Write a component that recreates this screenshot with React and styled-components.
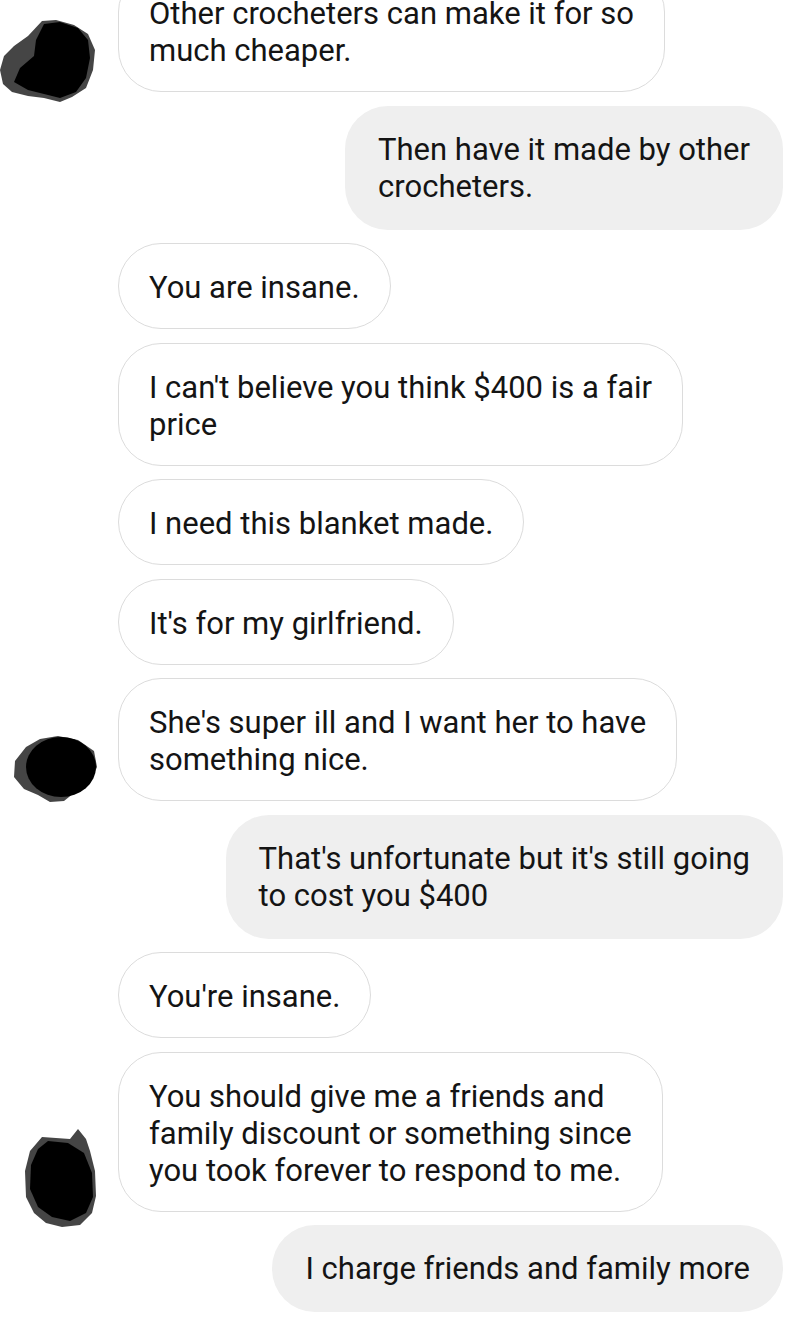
import styled, { createGlobalStyle } from "styled-components";

const GlobalStyle = createGlobalStyle`
  body {
    margin: 0;
    background: #ffffff;
    font-family: Roboto, "Noto Sans", Arial, sans-serif;
    color: #141414;
  }
`;

const Thread = styled.div`
  display: flex;
  flex-direction: column;
  gap: 13.5px;
  margin-top: -31px;
  padding-right: 17px;
  overflow: hidden;
`;

const Group = styled.div`
  display: flex;
  align-items: flex-end;
  justify-content: ${props => (props.$mine ? "flex-end" : "flex-start")};
`;

const AvatarSlot = styled.div`
  width: 118px;
  flex-shrink: 0;
  height: 0;
  position: relative;
`;

const Blob = styled.svg`
  position: absolute;
  left: 0;
  bottom: ${props => props.$drop || 0}px;
`;

const Stack = styled.div`
  display: flex;
  flex-direction: column;
  gap: 13.5px;
  align-items: ${props => (props.$mine ? "flex-end" : "flex-start")};
`;

const Bubble = styled.div`
  font-size: 31px;
  line-height: 37px;
  white-space: nowrap;
  border-radius: 43px;
  background: ${props => (props.$mine ? "#efefef" : "#ffffff")};
  border: ${props => (props.$mine ? "none" : "1px solid #dcdcdc")};
  padding: ${props => (props.$mine ? "25px 33px 25px 33px" : "25px 30px 22px")};
`;

function Avatar({ kind }) {
  if (kind === 1) {
    return (
      <Blob width="100" height="86" viewBox="0 21 100 86" $drop={-13}>
        <path
          fill="#454545"
          d="M42 23 L56 22 L74 27 L88 36 L95 52 L93 72 L86 90 L72 99 L60 104 L44 100 L28 98 L12 94 L3 86 L0 72 L4 58 L14 48 L28 38 Z"
        />
        <path
          fill="#000"
          d="M44 26 L60 24 L78 30 L88 42 L90 60 L86 80 L76 94 L60 100 L44 96 L28 92 L14 84 L20 70 L34 58 L36 42 Z"
        />
      </Blob>
    );
  }
  if (kind === 2) {
    return (
      <Blob width="100" height="70" viewBox="0 738 100 70" $drop={-4}>
        <path
          fill="#454545"
          d="M40 742 L58 739 L78 743 L94 754 L97 770 L90 786 L74 796 L64 804 L50 805 L38 798 L24 792 L14 780 L15 764 L26 750 Z"
        />
        <ellipse cx="61" cy="770" rx="35" ry="30" fill="#000" />
      </Blob>
    );
  }
  return (
    <Blob width="100" height="100" viewBox="0 1127 100 100" $drop={-16}>
      <path
        fill="#454545"
        d="M42 1136 L70 1138 L78 1128 L86 1138 L90 1150 L95 1170 L96 1195 L92 1212 L80 1224 L62 1226 L46 1222 L34 1212 L26 1196 L25 1170 L30 1150 Z"
      />
      <path
        fill="#000"
        d="M48 1140 L68 1142 L84 1152 L92 1172 L93 1196 L86 1212 L70 1220 L52 1216 L38 1206 L30 1188 L31 1164 L38 1148 Z"
      />
    </Blob>
  );
}

function Lines({ lines }) {
  return lines.map((line, i) => (
    <span key={i}>
      {i > 0 && <br />}
      {line}
    </span>
  ));
}

function TheirGroup({ avatar, messages }) {
  return (
    <Group>
      <AvatarSlot>
        <Avatar kind={avatar} />
      </AvatarSlot>
      <Stack>
        {messages.map((m, i) => (
          <Bubble key={i}>
            <Lines lines={m} />
          </Bubble>
        ))}
      </Stack>
    </Group>
  );
}

function MyGroup({ messages }) {
  return (
    <Group $mine>
      <Stack $mine>
        {messages.map((m, i) => (
          <Bubble key={i} $mine>
            <Lines lines={m} />
          </Bubble>
        ))}
      </Stack>
    </Group>
  );
}

export default function App() {
  return (
    <>
      <GlobalStyle />
      <Thread>
        <TheirGroup
          avatar={1}
          messages={[["Other crocheters can make it for so", "much cheaper."]]}
        />
        <MyGroup messages={[["Then have it made by other", "crocheters."]]} />
        <TheirGroup
          avatar={2}
          messages={[
            ["You are insane."],
            ["I can't believe you think $400 is a fair", "price"],
            ["I need this blanket made."],
            ["It's for my girlfriend."],
            ["She's super ill and I want her to have", "something nice."],
          ]}
        />
        <MyGroup
          messages={[["That's unfortunate but it's still going", "to cost you $400"]]}
        />
        <TheirGroup
          avatar={3}
          messages={[
            ["You're insane."],
            [
              "You should give me a friends and",
              "family discount or something since",
              "you took forever to respond to me.",
            ],
          ]}
        />
        <MyGroup messages={[["I charge friends and family more"]]} />
      </Thread>
    </>
  );
}
